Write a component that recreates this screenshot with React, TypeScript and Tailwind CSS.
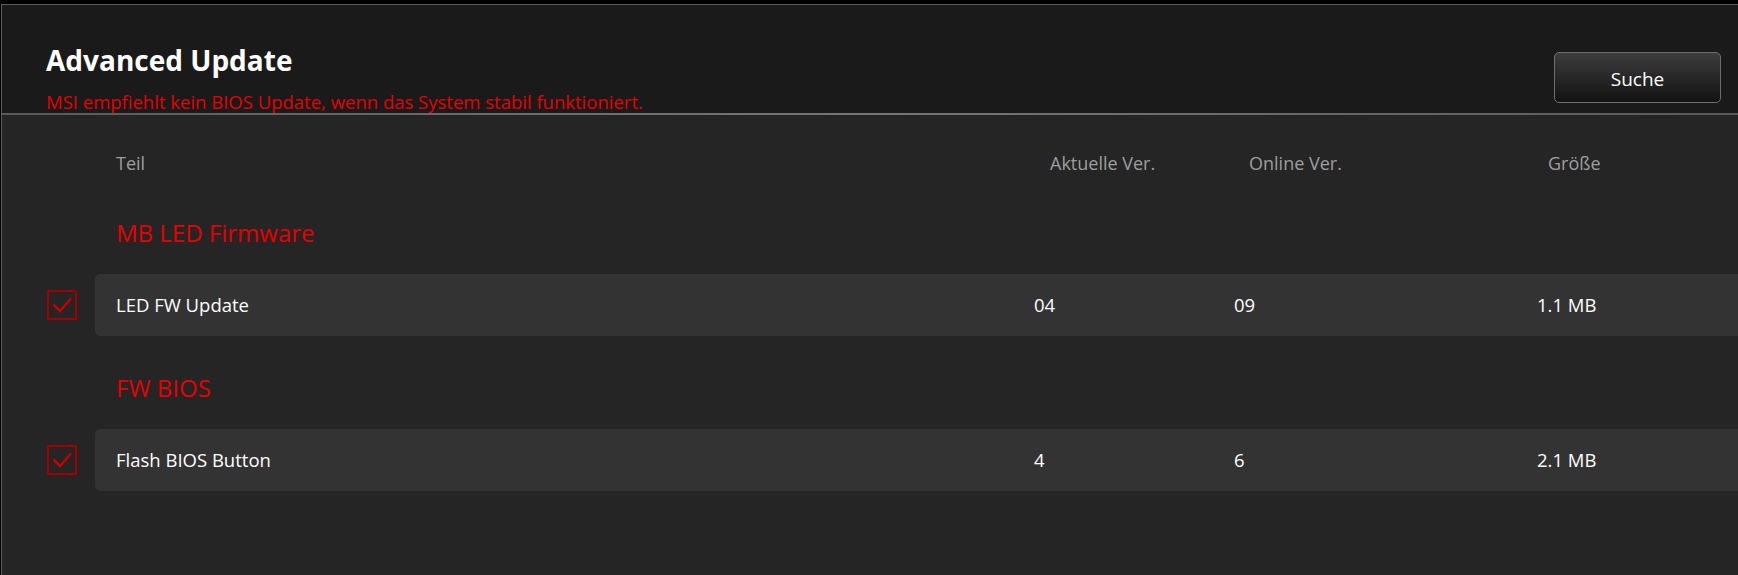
import React from 'react';

type Item = {
  name: string;
  current: string;
  online: string;
  size: string;
};

type Group = {
  title: string;
  items: Item[];
};

const groups: Group[] = [
  {
    title: 'MB LED Firmware',
    items: [{ name: 'LED FW Update', current: '04', online: '09', size: '1.1 MB' }],
  },
  {
    title: 'FW BIOS',
    items: [{ name: 'Flash BIOS Button', current: '4', online: '6', size: '2.1 MB' }],
  },
];

const font = { fontFamily: '"Open Sans", "Noto Sans", "Liberation Sans", sans-serif' };

// red checkbox as drawn by the MSI Center UI
const CheckBox: React.FC = () => (
  <div className="flex h-[30px] w-[30px] items-center justify-center border-2 border-[#a00000]">
    <svg width="22" height="18" viewBox="0 0 22 18" fill="none">
      <path d="M2.5 8.5 L9 15 L20 2.5" stroke="#c80000" strokeWidth="2.5" />
    </svg>
  </div>
);

const App: React.FC = () => {
  return (
    <div className="h-[575px] w-[1738px] overflow-hidden bg-black pl-[1px] pt-[4px]" style={font}>
      <div className="flex h-[571px] flex-col border-l border-t border-[#5c5c5c]">
        {/* Header */}
        <div className="flex h-[108px] justify-between bg-[#1a1a1a] pl-[44px] pr-[17px]">
          <div className="pt-[38px]">
            <h1 className="text-[28px] font-bold leading-[34px] text-white">Advanced Update</h1>
            <p className="mt-[13px] text-[18.5px] leading-[24px] text-[#e60000]">
              MSI empfiehlt kein BIOS Update, wenn das System stabil funktioniert.
            </p>
          </div>
          <div className="pt-[47px]">
            <button className="h-[51px] w-[167px] rounded-[5px] border border-[#6e6e6e] bg-gradient-to-b from-[#3d3d3d] to-[#131313] pt-[3px] text-[19px] text-white">
              Suche
            </button>
          </div>
        </div>

        <div className="h-[2px] bg-gradient-to-r from-[#5a5a5a] via-[#777777] to-[#5a5a5a]" />

        {/* Body */}
        <div className="flex-1 bg-[#252525] pt-[36px]">
          {/* Column headers */}
          <div className="flex text-[18px] leading-[24px] text-[#9e9e9e]">
            <div className="w-[93px]" />
            <div className="w-[939px] pl-[21px]">Teil</div>
            <div className="w-[200px] pl-[16px]">Aktuelle Ver.</div>
            <div className="w-[303px] pl-[15px]">Online Ver.</div>
            <div className="pl-[11px]">Größe</div>
          </div>

          <div className="mt-[42px] flex flex-col">
            {groups.map((group, gi) => (
              <div key={group.title} className={gi > 0 ? 'mt-[36px]' : ''}>
                <h2 className="pl-[114px] text-[24px] leading-[32px] text-[#e60000]">{group.title}</h2>
                {group.items.map((item) => (
                  <div key={item.name} className="mt-[25px] flex h-[62px] items-center">
                    <div className="flex w-[93px] justify-end pr-[18px]">
                      <CheckBox />
                    </div>
                    <div className="flex h-full flex-1 items-center rounded-l-[5px] bg-[#333333] text-[18.5px] text-white">
                      <div className="w-[939px] pl-[21px]">{item.name}</div>
                      <div className="w-[200px]">{item.current}</div>
                      <div className="w-[303px]">{item.online}</div>
                      <div>{item.size}</div>
                    </div>
                  </div>
                ))}
              </div>
            ))}
          </div>
        </div>
      </div>
    </div>
  );
};

export default App;
